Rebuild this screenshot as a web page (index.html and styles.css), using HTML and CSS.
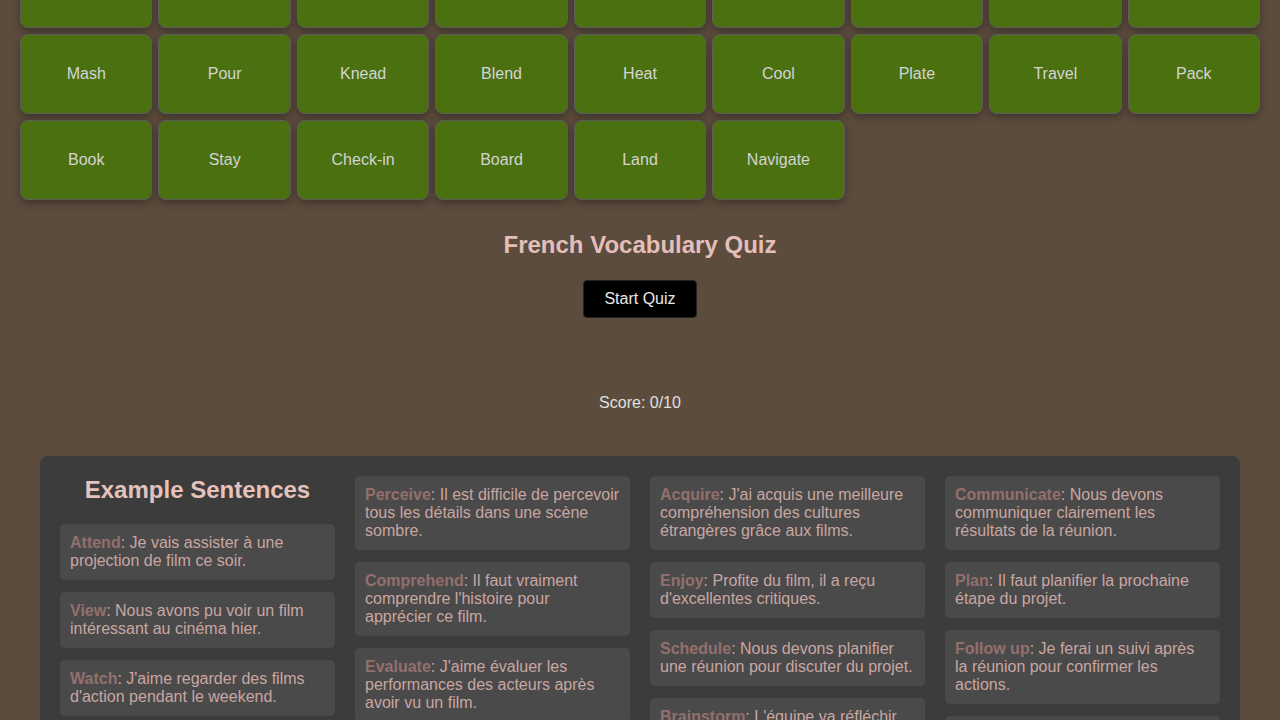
FILE: index.html
```html
<!DOCTYPE html>
<html lang="en">
<head>
    <meta charset="UTF-8">
    <meta name="viewport" content="width=device-width, initial-scale=1.0">
    <title>French Vocabulary Quiz</title>
    <link rel="stylesheet" href="styles.css">
</head>
<body>
    <div class="word-grid">
        <button class="word">Chop</button>
        <button class="word">Slice</button>
        <button class="word">Dice</button>
        <button class="word">Stir</button>
        <button class="word">Whisk</button>
        <button class="word">Bake</button>
        <button class="word">Boil</button>
        <button class="word">Fry</button>
        <button class="word">Grill</button>
        <button class="word">Mash</button>
        <button class="word">Pour</button>
        <button class="word">Knead</button>
        <button class="word">Blend</button>
        <button class="word">Heat</button>
        <button class="word">Cool</button>
        <button class="word">Plate</button>
        <button class="word">Travel</button>
        <button class="word">Pack</button>
        <button class="word">Book</button>
        <button class="word">Stay</button>
        <button class="word">Check-in</button>
        <button class="word">Board</button>
        <button class="word">Land</button>
        <button class="word">Navigate</button>
    </div>

    <div class="quiz">
        <h2 class="quiz-title">French Vocabulary Quiz</h2>
        <button class="start-btn">Start Quiz</button>
        <div class="question"></div>
        <p class="score">Score: 0/10</p>
    </div>

    <div class="examples">
        <div class="examples-col">
            <h2 class="examples-title">Example Sentences</h2>
            <div class="sentence"><b>Attend</b>: Je vais assister à une projection de film ce soir.</div>
            <div class="sentence"><b>View</b>: Nous avons pu voir un film intéressant au cinéma hier.</div>
            <div class="sentence"><b>Watch</b>: J'aime regarder des films d'action pendant le weekend.</div>
            <div class="sentence"><b>Discuss</b>: Nous allons discuter du film après la séance.</div>
        </div>
        <div class="examples-col">
            <div class="sentence"><b>Perceive</b>: Il est difficile de percevoir tous les détails dans une scène sombre.</div>
            <div class="sentence"><b>Comprehend</b>: Il faut vraiment comprendre l'histoire pour apprécier ce film.</div>
            <div class="sentence"><b>Evaluate</b>: J'aime évaluer les performances des acteurs après avoir vu un film.</div>
        </div>
        <div class="examples-col">
            <div class="sentence"><b>Acquire</b>: J'ai acquis une meilleure compréhension des cultures étrangères grâce aux films.</div>
            <div class="sentence"><b>Enjoy</b>: Profite du film, il a reçu d'excellentes critiques.</div>
            <div class="sentence"><b>Schedule</b>: Nous devons planifier une réunion pour discuter du projet.</div>
            <div class="sentence"><b>Brainstorm</b>: L'équipe va réfléchir ensemble à de nouvelles idées.</div>
        </div>
        <div class="examples-col">
            <div class="sentence"><b>Communicate</b>: Nous devons communiquer clairement les résultats de la réunion.</div>
            <div class="sentence"><b>Plan</b>: Il faut planifier la prochaine étape du projet.</div>
            <div class="sentence"><b>Follow up</b>: Je ferai un suivi après la réunion pour confirmer les actions.</div>
            <div class="sentence"><b>Delegate</b>: Je vais déléguer cette tâche à un collègue.</div>
        </div>
    </div>
</body>
</html>
```

FILE: styles.css
```css
body {
  margin: 0;
  padding: 0 20px 40px;
  background: #5c4c3d;
  font-family: "Liberation Sans", Arial, sans-serif;
  color: #e0e0e0;
}

.word-grid {
  display: grid;
  grid-template-columns: repeat(9, 1fr);
  gap: 6px;
  margin-top: -52px;
}

.word {
  height: 80px;
  background: #4a7010;
  border: 1px solid #5e5e5e;
  border-radius: 8px;
  box-shadow: 0 3px 8px rgba(0, 0, 0, 0.35);
  color: #d4d4d4;
  font-family: "Liberation Sans", Arial, sans-serif;
  font-size: 16px;
  cursor: pointer;
}

.quiz {
  text-align: center;
}

.quiz-title {
  font-size: 24px;
  color: #e4bfba;
  margin: 31px 0 21px;
}

.start-btn {
  background: #000;
  color: #e8e8e8;
  border: 1px solid #222;
  border-radius: 4px;
  padding: 9px 20px;
  font-family: "Liberation Sans", Arial, sans-serif;
  font-size: 16px;
}

.question {
  height: 60px;
}

.score {
  margin: 16px 0 0;
  font-size: 16px;
}

.examples {
  max-width: 1160px;
  margin: 44px auto 0;
  padding: 20px;
  background: #3c3c3c;
  border-radius: 8px;
  display: grid;
  grid-template-columns: repeat(4, 1fr);
  gap: 20px;
  align-items: start;
}

.examples-col {
  display: flex;
  flex-direction: column;
  gap: 12px;
}

.examples-title {
  text-align: center;
  font-size: 24px;
  color: #e6c2bd;
  margin: 0 0 8px;
}

.sentence {
  background: #4a4a4a;
  border-radius: 5px;
  padding: 10px;
  font-size: 16px;
  line-height: 18px;
  color: #c9a6a2;
}

.sentence b {
  color: #93706d;
}
```
